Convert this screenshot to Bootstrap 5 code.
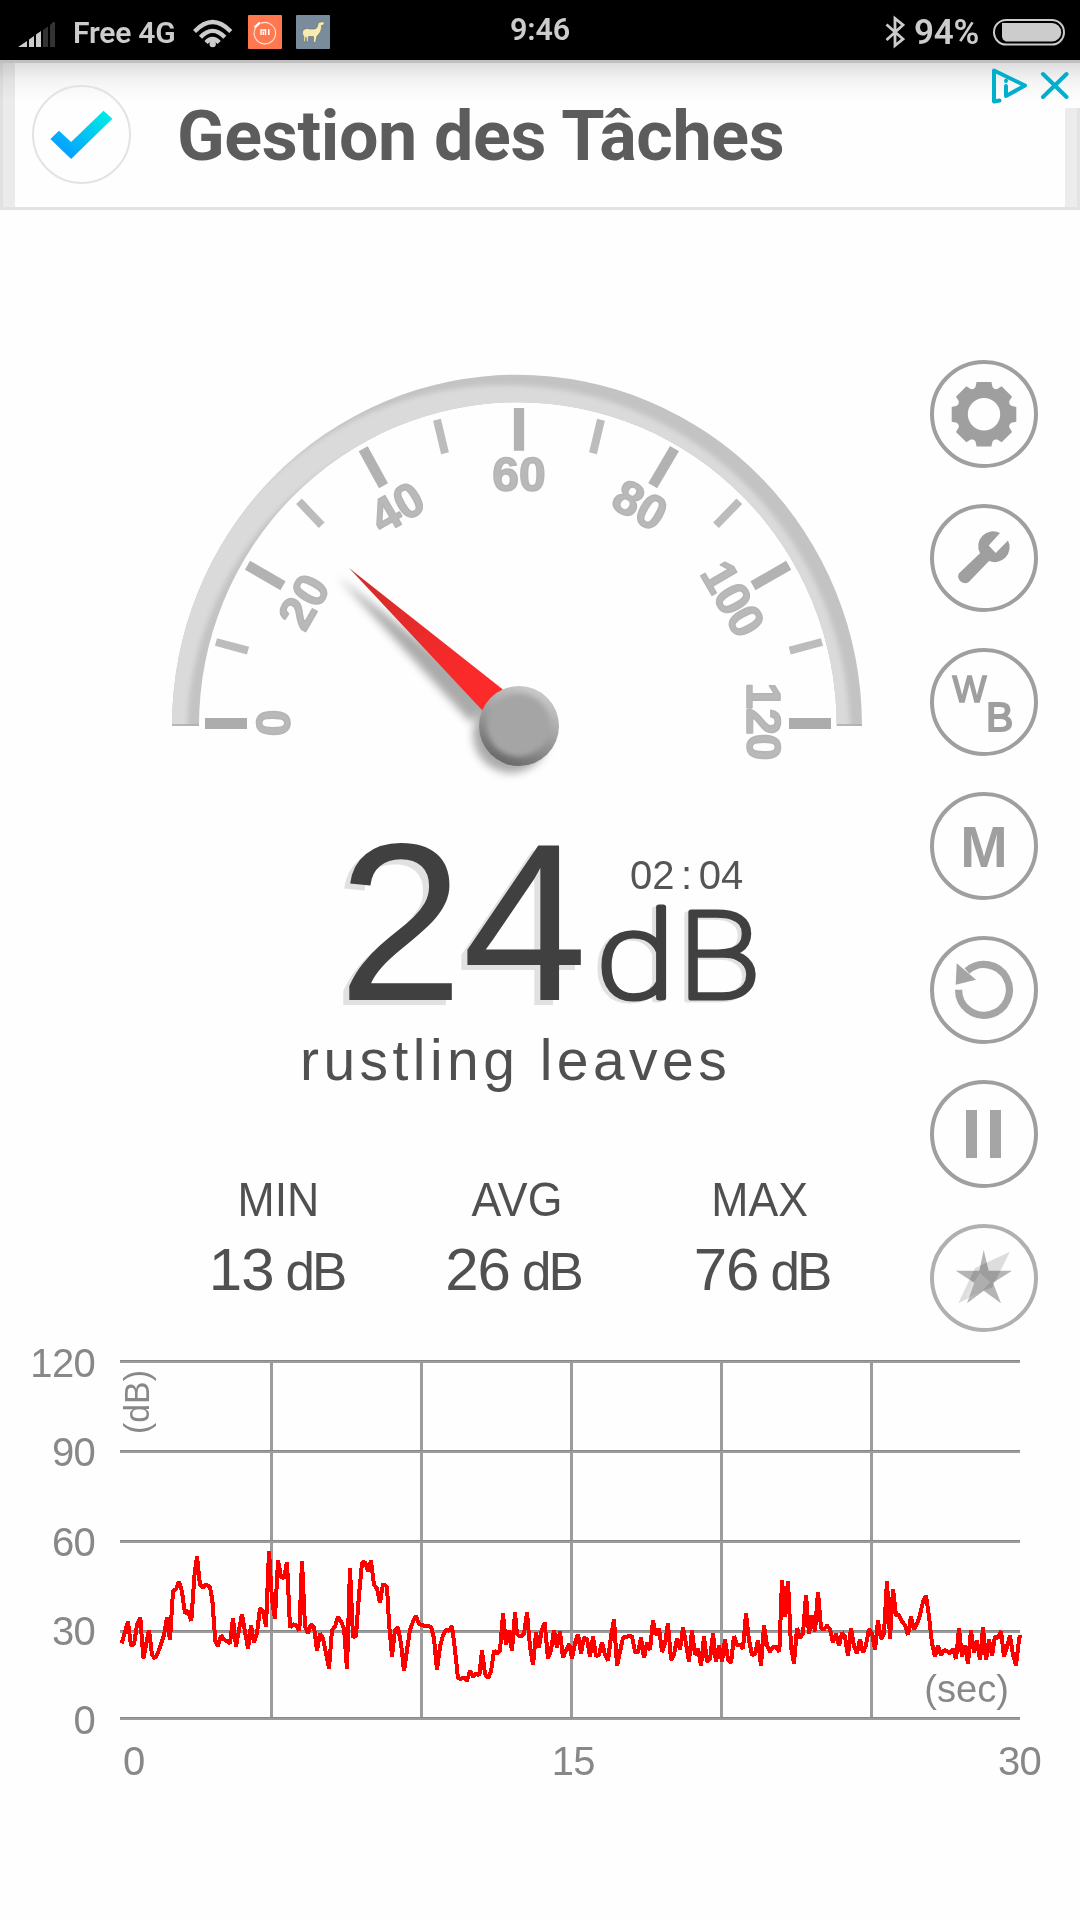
<!DOCTYPE html>
<html lang="en">
<head>
<meta charset="utf-8">
<meta name="viewport" content="width=device-width, initial-scale=1">
<title>Sound Meter</title>
<link href="https://cdn.jsdelivr.net/npm/bootstrap@5.3.0/dist/css/bootstrap.min.css" rel="stylesheet">
<style>
body{font-family:"Liberation Sans",Arial,sans-serif;background:#fefefe;color:#505050;width:1080px;height:1920px;overflow:hidden}
svg{display:block;flex:none}
.statusbar{height:60px;background:#000;color:#ccc;font-family:Roboto,sans-serif;font-weight:600;display:grid;grid-template-columns:1fr auto 1fr}
.carrier{font-size:30px;line-height:60px;letter-spacing:-.2px;padding-top:2px}
.clock{font-size:30.5px;line-height:60px;letter-spacing:-.2px}
.level{font-size:35px;line-height:60px;padding-top:3px;letter-spacing:-.3px}
.adbar{height:150px;border-top:3px solid #bfbfbf;border-bottom:3px solid #e3e3e3;background:linear-gradient(rgba(0,0,0,.13),rgba(0,0,0,.04) 18px,rgba(0,0,0,0) 38px),#fefefe;position:relative}
.adedge-l{width:15px;background:#ececec;border-left:3px solid #e2e2e2;mix-blend-mode:multiply}
.adedge-r{width:15px;margin-top:45px;background:#ececec;border-right:3px solid #e3e3e3}
.adlogo{width:99px;height:99px;margin:22px 0 0 17px;border:2px solid #e3e3e3}
.adtitle{font:700 70px/96px Roboto,sans-serif;color:#5c5c5c;margin:25px 0 0 46px;white-space:nowrap;letter-spacing:-.35px}
.adtools{position:absolute;right:11px;top:4px}
.meter{width:930px;padding-top:150px}
.gauge{margin-left:160px}
.gauge text{font-weight:700;font-size:48px;fill:#b9b9b9;text-anchor:middle;stroke:#b5b5b5;stroke-width:1.6;stroke-linejoin:round}
.readout{height:180px;margin:42px 0 0 338px}
.bigval{font-size:225px;line-height:180px;width:248px;color:#404040;text-shadow:-6px 5px 0 #e1e1e1;letter-spacing:-.8px}
.elapsed{font-size:40px;line-height:40px;margin:23px 0 0 44px;color:#555}
.elapsed span{padding:0 6.6px}
.unit{overflow:visible;filter:drop-shadow(-4px 2.5px 0 #e1e1e1);font-family:Roboto;font-weight:100;font-size:121px;fill:#404040;stroke:#404040;stroke-width:5.2;stroke-linejoin:round}
.caption-text{font-size:57px;line-height:80px;letter-spacing:4.45px;margin:8px 0 0 300px;white-space:nowrap}
.stats{width:726px;margin:75px 0 0 156px}
.stat-name{font-size:48px;line-height:50px;transform:scaleX(.93)}
.stat-num{font-size:60px;line-height:70px;margin-top:10px;letter-spacing:-1px}
.stat-unit{font-size:53px;letter-spacing:-3px;margin-left:12px}
.tools{padding-top:150px;gap:36px;width:108px}
.tool{width:108px;height:108px;border:0;background:none;color:#9f9f9f}
.history{margin-top:11px;color:#888;font-size:40px;line-height:40px;letter-spacing:-.7px}
.yaxis{width:95px;height:397px}
.plot{margin:17px 0 0 25px}
.xaxis{margin:1px 39px 0 123px}
.trace{fill:none;stroke:#f00;stroke-width:12;stroke-linejoin:bevel}
</style>
</head>
<body>
<header class="statusbar">
  <div class="d-flex align-items-center">
    <svg width="38" height="60" viewBox="18 0 38 60" style="margin-left:18px"><path fill="#ccc" d="M18 45 27 39V45ZM29 37.500 34 34V45H29ZM36 32.500 41 29V45H36Z"/><path fill="#333" d="M43 28 48 24.500V45H43ZM50 23 53 20H55V45H50Z"/></svg>
    <span class="carrier" style="margin-left:17px">Free 4G</span>
    <svg class="ms-auto" width="40" height="60" viewBox="193 0 40 60" style="margin-right:15px"><g fill="none" stroke="#ccc" stroke-width="4.300"><path d="M194.500 29.500Q212.500 10.500 230.800 29.500M200.500 35.200Q212.500 22.500 224.800 35.200M206 40.500Q212.500 33.500 219.200 40.500"/></g><circle cx="212.700" cy="42" r="3.200" fill="#ccc"/></svg>
    <svg width="82" height="60" viewBox="248 0 82 60" style="margin-right:180px"><rect x="248" y="13" width="34" height="34" rx="1" fill="#ff7850"/><path d="M261 21.200A10.700 10.700 0 1 1 255.500 26" fill="none" stroke="#ffe5dc" stroke-width="1.100"/><path d="M254.700 25.500 260 20.500" stroke="#fff" stroke-width="2.400"/><path d="M261 33V28H265.500V33M263.300 29.500V33M268.800 27V33" fill="none" stroke="#fff" stroke-width="1.500"/><rect x="296" y="13" width="34" height="34" rx="1" fill="#788c9c"/><path d="M303 28Q306 25.500 310 27H314Q317 27 317.500 24L318.500 20.500 323.500 19.500 324.500 22.500 321.500 23.500Q322 30 317 34L315.500 40.500 313.500 40.500 313.500 34.500 308.500 34.500 308 40 306.500 40 306 35 305 40 303.500 40 303.800 34.500Q301.500 32 303 28Z" fill="#f8ebb0" stroke="#667" stroke-width=".6"/></svg>
  </div>
  <div class="clock">9:46</div>
  <div class="d-flex align-items-center justify-content-end">
    <svg width="20" height="60" viewBox="884 0 20 60"><path d="M885.500 22.500 902 37 894 43.500V16.500L902 23 885.500 38" fill="none" stroke="#ccc" stroke-width="2.800"/></svg>
    <span class="level" style="margin:0 14px 0 9px">94%</span>
    <svg width="72" height="60" viewBox="993 0 72 60" style="margin-right:15px"><rect x="994" y="18" width="70" height="24.500" rx="12.200" fill="none" stroke="#ccc" stroke-width="2"/><path d="M1002 21H1052A9 9 0 0 1 1052 39.500H1006Q1002 38 1002 34Z" fill="#ccc"/></svg>
  </div>
</header>
<section class="adbar d-flex">
  <div class="adedge-l"></div>
  <div class="adlogo rounded-circle d-flex align-items-center justify-content-center"><svg width="63" height="50" viewBox="50 110 62 50"><defs><linearGradient id="tick" x1="0" y1="1" x2="1" y2="0"><stop offset=".2" stop-color="#06a3ff"/><stop offset="1" stop-color="#00f2e2"/></linearGradient></defs><path fill="url(#tick)" d="M49.900 139 58.500 130.700 70.600 142 103 110.700 111.900 118.700 70.600 159Z"/></svg></div>
  <div class="adtitle">Gestion des Tâches</div>
  <div class="adedge-r ms-auto"></div>
  <svg class="adtools" width="78" height="38" viewBox="991 67 78 38"><g fill="none" stroke="#00aecd" stroke-width="4" stroke-linecap="round" stroke-linejoin="round"><path d="M999.500 100.500 994 101.500V70.500L1025 85.500 1006 96V86M1006 81V80.800"/><path d="M1043 74 1066.500 97M1066.500 74 1043 97"/></g></svg>
</section>
<main>
<div class="d-flex">
  <div class="meter">
    <svg class="gauge" width="720" height="430" viewBox="160 360 720 430">
      <defs>
        <clipPath id="ring"><path d="M172 725.700A345 351 0 0 1 862 725.700H836.700A318.800 323.400 0 0 0 199 725.700Z"/></clipPath>
        <filter id="b3" x="-10%" y="-10%" width="120%" height="120%"><feGaussianBlur stdDeviation="2.500"/></filter>
        <filter id="b5" x="-20%" y="-20%" width="140%" height="140%"><feGaussianBlur stdDeviation="4"/></filter>
        <linearGradient id="ndl" gradientUnits="userSpaceOnUse" x1="349" y1="568" x2="492" y2="700"><stop offset="0" stop-color="#cf2c2c"/><stop offset=".7" stop-color="#f52a2a"/><stop offset="1" stop-color="#ff2a2a"/></linearGradient>
        <linearGradient id="knob" x1=".75" y1="0" x2=".3" y2="1"><stop offset="0" stop-color="#cfcfcf"/><stop offset=".45" stop-color="#a4a4a4"/><stop offset="1" stop-color="#666"/></linearGradient>
      </defs>
      <g clip-path="url(#ring)"><rect x="160" y="360" width="720" height="370" fill="#c3c3c3"/><path filter="url(#b3)" fill="#dadada" d="M160 755V736A345 351 0 0 1 850 736V755H825V736A318.800 323.400 0 0 0 187 736V755Z"/></g>
      <path d="M172 725H199M837 725H862" stroke="#aaa" stroke-width="1.300"/>
      <g stroke="#b2b2b2" stroke-width="10.300"><path d="M205 723.500H247M789 723.500H831" stroke="#acacac" stroke-width="11"/><path d="M519 408V450.700M363.200 448.700 383.500 485.700M674.500 448.700 652.700 485.700M247.500 565.300 283 585.700M788.700 565.300 753 585.700"/></g>
      <g stroke="#bcbcbc" stroke-width="8"><path d="M437 419.700 445 453.300M601 419.700 593 453.300M299 501.300 321.700 525.300M739.300 501.300 716 525.300M216 642 248 650.700M822 642 789.700 650.700"/></g>
      <text transform="translate(273 723) rotate(-90)" y="16.500">0</text>
      <text transform="translate(303.700 601.700) rotate(-60)" y="16.500">20</text>
      <text transform="translate(397 507.500) rotate(-30)" y="16.500">40</text>
      <text x="519" y="491">60</text>
      <text transform="translate(640 505) rotate(30)" y="16.500">80</text>
      <text transform="translate(732.700 598.500) rotate(60)" y="16.500" letter-spacing="-1">100</text>
      <text transform="translate(763.700 721) rotate(90)" y="16.500" letter-spacing="-1">120</text>
      <g filter="url(#b5)" fill="#000" fill-opacity=".33"><path d="M338 577 494 699 470 722Z"/><circle cx="511" cy="735" r="38"/></g>
      <path fill="url(#ndl)" d="M349 568 502.300 689 510 720 482 710Z"/>
      <circle cx="519" cy="726" r="40" fill="url(#knob)"/><circle cx="518.500" cy="725" r="31.500" fill="#a5a5a5" filter="url(#b3)"/>
    </svg>
    <div class="readout d-flex">
      <div class="bigval">24</div>
      <div>
        <div class="elapsed">02<span>:</span>04</div>
        <svg class="unit" width="190" height="117" viewBox="586 895 190 117"><text x="596" y="997.500" textLength="79" lengthAdjust="spacingAndGlyphs">d</text><text x="678" y="997.500" textLength="82" lengthAdjust="spacingAndGlyphs">B</text></svg>
      </div>
    </div>
    <div class="caption-text">rustling leaves</div>
    <div class="stats d-flex text-center">
      <div class="w-100"><div class="stat-name ps-1">MIN</div><div class="stat-num">13<span class="stat-unit">dB</span></div></div>
      <div class="w-100 pe-1"><div class="stat-name">AVG</div><div class="stat-num pe-2">26<span class="stat-unit">dB</span></div></div>
      <div class="w-100"><div class="stat-name pe-1">MAX</div><div class="stat-num">76<span class="stat-unit">dB</span></div></div>
    </div>
  </div>
  <nav class="tools d-flex flex-column">
    <button class="tool p-0" aria-label="Settings"><svg width="108" height="108"><circle cx="54" cy="54" r="52" fill="none" stroke="currentColor" stroke-width="4"/><circle cx="54" cy="54.300" r="21.200" fill="none" stroke="currentColor" stroke-width="10"/><g fill="currentColor"><path id="tooth" d="M46.600 22H61.400L62.500 27Q64 29.500 67 30L63 37H45L41 30Q44 29.500 45.500 27Z"/><use href="#tooth" transform="rotate(45 54 54.300)"/><use href="#tooth" transform="rotate(90 54 54.300)"/><use href="#tooth" transform="rotate(135 54 54.300)"/><use href="#tooth" transform="rotate(180 54 54.300)"/><use href="#tooth" transform="rotate(225 54 54.300)"/><use href="#tooth" transform="rotate(270 54 54.300)"/><use href="#tooth" transform="rotate(315 54 54.300)"/></g></svg></button>
    <button class="tool p-0" aria-label="Calibrate"><svg width="108" height="108"><circle cx="54" cy="54" r="52" fill="none" stroke="currentColor" stroke-width="4"/><path fill="currentColor" d="M70 29 58.700 41.400 65.700 49 78 36.500A14.900 14.900 0 0 1 59 57L38.800 78A6.900 6.900 0 0 1 28.800 69.500L50 49.300A14.900 14.900 0 0 1 70 29Z"/></svg></button>
    <button class="tool p-0" aria-label="Theme"><svg width="108" height="108"><circle cx="54" cy="54" r="52" fill="none" stroke="currentColor" stroke-width="4"/><g fill="currentColor" stroke="currentColor"><text x="22.500" y="53.500" font-size="36" stroke-width="1.600">W</text><text x="56" y="83" font-size="41" stroke-width="1.900">B</text></g></svg></button>
    <button class="tool p-0" aria-label="Mode"><svg width="108" height="108"><circle cx="54" cy="54" r="52" fill="none" stroke="currentColor" stroke-width="4"/><text x="54" y="75" font-size="57" font-weight="700" text-anchor="middle" fill="currentColor">M</text></svg></button>
    <button class="tool p-0" aria-label="Reset"><svg width="108" height="108"><circle cx="54" cy="54" r="52" fill="none" stroke="currentColor" stroke-width="4"/><path d="M28.600 53.800A25.400 25.400 0 1 0 37 35" fill="none" stroke="#a5a5a5" stroke-width="7.200"/><path fill="#a5a5a5" d="M26.700 27.300 25.700 48.700 46 43.700Z"/></svg></button>
    <button class="tool p-0" aria-label="Pause"><svg width="108" height="108"><circle cx="54" cy="54" r="52" fill="none" stroke="currentColor" stroke-width="4"/><path fill="#a5a5a5" d="M36 30H47V78H36ZM60 30H71V78H60Z"/></svg></button>
    <button class="tool p-0" aria-label="Rate"><svg width="108" height="108"><circle cx="54" cy="54" r="52" fill="none" stroke="#b0b0b0" stroke-width="4"/><path fill="#b5b5b5" d="M53.700 26 58.700 46.700H82L63 58.700 71 79.300 53.700 66.700 37 79.300 44.300 58.700 25.700 46.700H49.300Z"/><path fill="#000" fill-opacity=".13" d="M80 27.700 62 63.700 53 66.700 28.300 79.300 45 44Z"/><path fill="#fff" fill-opacity=".18" d="M50 49 60 58 53 66 38 76 36 70Z"/></svg></button>
  </nav>
</div>
<section class="history">
  <div class="d-flex">
    <div class="yaxis d-flex flex-column justify-content-between align-items-end"><span>120</span><span>90</span><span>60</span><span>30</span><span>0</span></div>
    <svg class="plot" width="903" height="380" viewBox="0 0 2709 1140">
      <g fill="#9c9c9c" shape-rendering="crispEdges"><path d="M0 0H2700V9H0ZM0 270H2700V279H0ZM0 540H2700V549H0ZM0 810H2700V819H0ZM0 1071H2700V1080H0ZM450 0H459V1071H450ZM900 0H909V1071H900ZM1350 0H1359V1071H1350ZM1800 0H1809V1071H1800ZM2250 0H2259V1071H2250Z"/><path fill="#888" d="M0 0H2700V3H0ZM0 270H2700V273H0ZM0 540H2700V543H0ZM0 810H2700V813H0ZM0 1071H2700V1074H0Z"/></g>
      <g fill="#888" letter-spacing="0"><text transform="translate(87 222) rotate(-90)" font-size="106" textLength="192" lengthAdjust="spacingAndGlyphs">(dB)</text><text x="2413" y="1026" font-size="118" textLength="254" lengthAdjust="spacingAndGlyphs">(sec)</text></g>
      <g shape-rendering="crispEdges">
      <polyline class="trace" transform="translate(-300 -60)" points="305,910 324,845 333,918 342,912 351,855 361,833 370,955 387,870 396,945 405,955 415,935 432,885 441,833 450,900 459,752 468,748 477,724 486,755 495,820 504,812 514,843 523,710 531,648 540,735 549,742 558,733 570,742 577,780 586,905 594,918 603,886 612,898 630,910 639,836 648,920 657,870 666,822 675,875 684,926 693,855 702,908 711,880 720,805 729,812 738,860 747,632 756,780 765,836 774,660 783,710 792,715 801,666 810,862 819,853 829,856 838,872 846,662 855,858 864,880 873,853 882,862 891,932 900,880 909,895 927,986 936,870 945,860 954,830 963,845 972,865 981,988 990,684 999,892 1008,888 1017,765 1026,668 1035,666 1044,695 1053,662 1062,735 1071,745 1080,788 1089,732 1101,740 1107,850 1116,950 1125,870 1134,862 1143,910 1152,993 1161,930 1170,870 1179,845 1188,828 1197,852"/>
      <polyline class="trace" transform="translate(840 420)" points="48,348 57,372 66,375 75,378 93,380 102,415 111,510 120,440 129,405 138,390 147,392 156,378 165,450 174,535 183,537 192,532 201,543 210,512 219,530 228,520 238,526 246,452 255,522 264,535 273,515 282,452 291,462 300,452 309,341 318,435 327,392 336,452 345,338 351,403 362,410 372,400 381,338 390,440 399,495 408,398 417,442 425,390 434,368 444,476 453,450 462,390 471,442 480,395 489,473 498,450 508,432 516,476 525,430 534,403 543,460 552,412 561,418 570,470 579,410 588,468 597,466 606,426 615,465 624,482 633,410 642,358 651,498 660,455 669,413 678,410 696,408 705,455 714,458 723,413 732,474 741,428 750,450 759,362 768,405 777,385 786,456 795,430 804,370 813,480 822,465 831,415 840,450 849,383 858,430 867,484 876,392 885,465 894,445 903,498 912,410 921,485 930,478 939,401 948,486 957,435 966,486"/>
      <polyline class="trace" transform="translate(1800 420)" points="6,486 15,418 24,478 33,489 42,408 51,435 60,434 69,446 78,341 87,420 96,465 105,462 114,420 123,498 132,377 141,435 150,455 159,440 168,440 178,455 186,240 195,350 204,242 213,440 222,490 231,384 240,415 249,400 258,284 267,402 276,345 285,394 294,275 303,385 312,388 321,377 330,388 339,428 348,402 357,438 366,398 375,410 384,468 393,384 402,440 411,460 420,417 429,458 438,435 447,387 456,400 465,450 474,362 483,417 492,400 501,243 510,416 519,267 528,345 537,345 546,365 555,375 564,405 573,350 582,388 591,372 600,345 609,305 618,287 627,350 636,430 645,470 654,438 663,466 672,450 681,454 690,460 699,446 708,477 717,386 726,470 735,437 744,490 753,390 762,458 771,422 780,480 789,383 798,480 807,418 816,468 825,408 834,415 843,393 852,470 861,440 870,407 879,465 888,496 897,420 900,405"/>
      </g>
    </svg>
  </div>
  <div class="xaxis d-flex justify-content-between"><span>0</span><span class="ps-1">15</span><span>30</span></div>
</section>
</main>
<script src="https://cdn.jsdelivr.net/npm/bootstrap@5.3.0/dist/js/bootstrap.bundle.min.js"></script>
</body>
</html>
